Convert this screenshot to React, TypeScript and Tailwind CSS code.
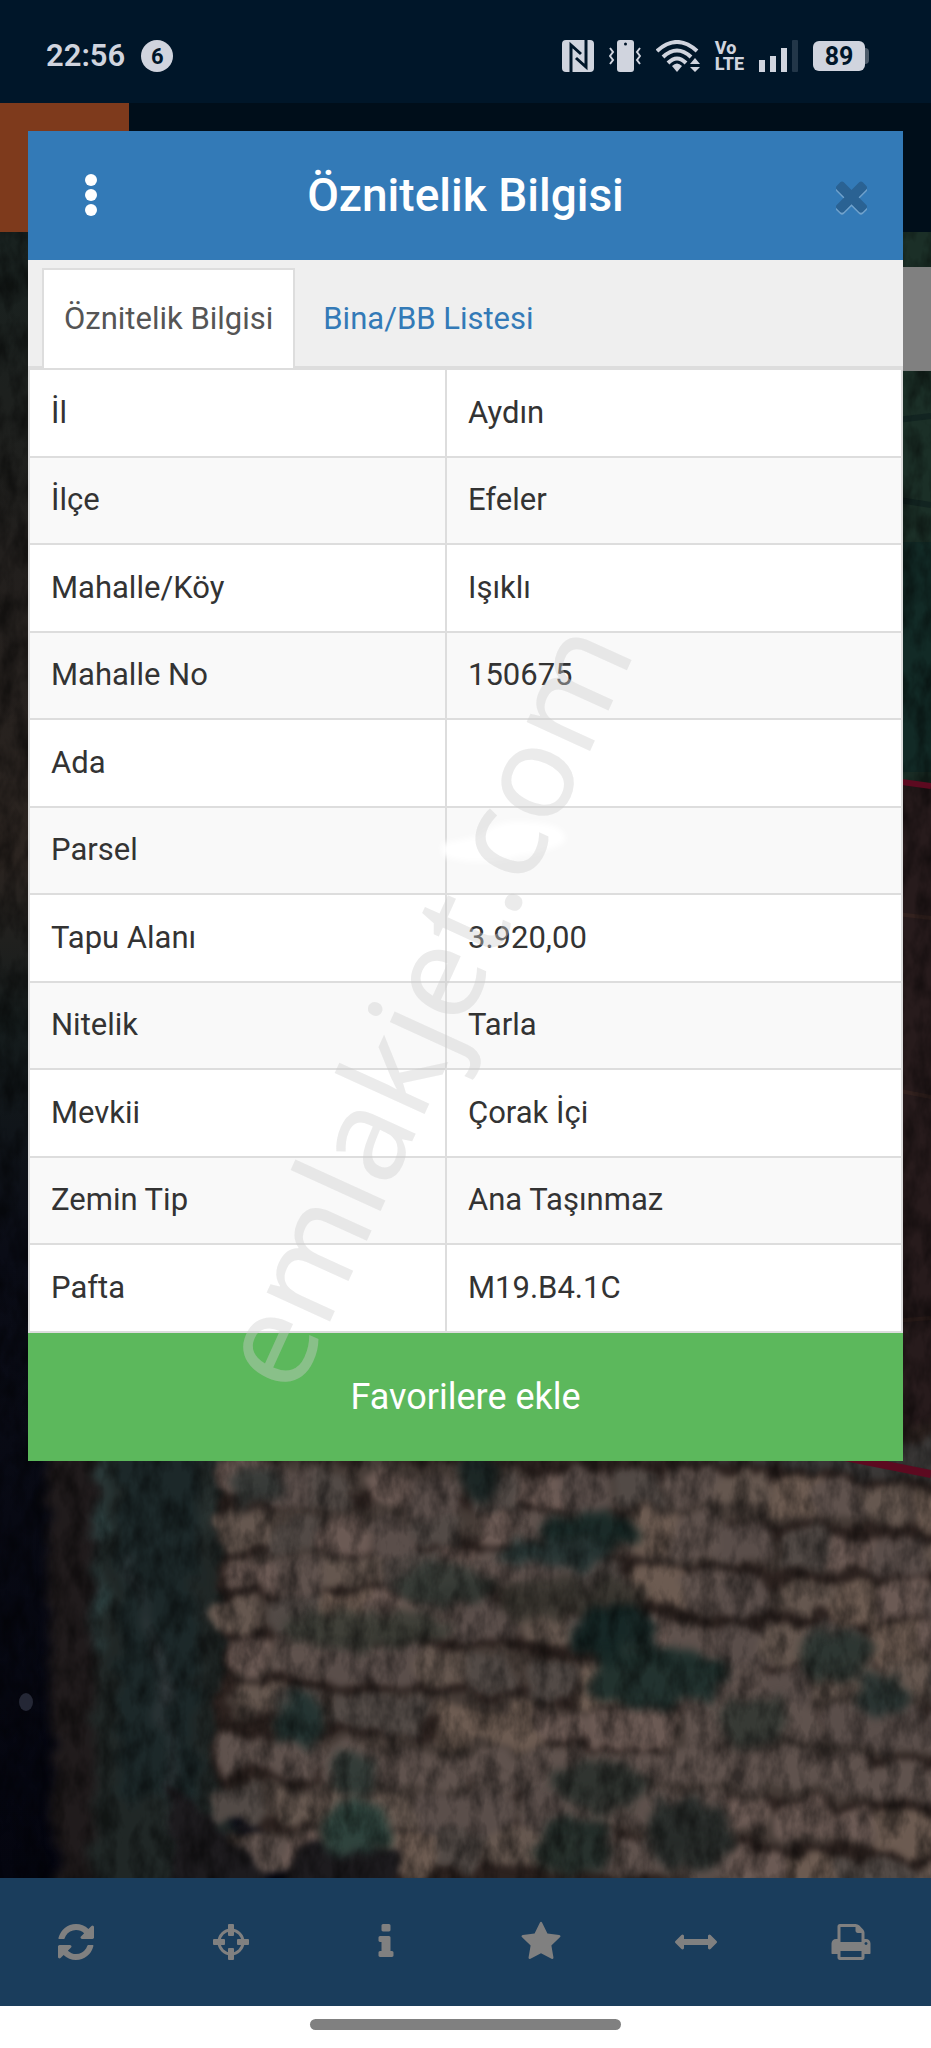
import { useState } from "react";

const parcelRows = [
  { label: "İl", value: "Aydın" },
  { label: "İlçe", value: "Efeler" },
  { label: "Mahalle/Köy", value: "Işıklı" },
  { label: "Mahalle No", value: "150675" },
  { label: "Ada", value: "" },
  { label: "Parsel", value: "", erased: true },
  { label: "Tapu Alanı", value: "3.920,00" },
  { label: "Nitelik", value: "Tarla" },
  { label: "Mevkii", value: "Çorak İçi" },
  { label: "Zemin Tip", value: "Ana Taşınmaz" },
  { label: "Pafta", value: "M19.B4.1C" },
];

const tools = [
  {
    label: "Yenile",
    path: "M1639 1056q0 5-1 7-64 268-268 434.5t-478 166.5q-146 0-282.5-55t-243.5-157l-129 129q-19 19-45 19t-45-19-19-45v-448q0-26 19-45t45-19h448q26 0 45 19t19 45-19 45l-137 137q71 66 161 102t187 36q134 0 250-65t186-179q11-17 53-117 8-23 30-23h192q13 0 22.5 9.5t9.5 22.5zm25-800v448q0 26-19 45t-45 19h-448q-26 0-45-19t-19-45 19-45l138-138q-148-137-349-137-134 0-250 65t-186 179q-11 17-53 117-8 23-30 23h-199q-13 0-22.5-9.5t-9.5-22.5v-7q65-268 270-434.5t480-166.5q146 0 284 55.5t245 156.5l130-129q19-19 45-19t45 19 19 45z",
  },
  { label: "Konum", path: "" },
  {
    label: "Bilgi",
    path: "M1216 1344v128q0 26-19 45t-45 19h-512q-26 0-45-19t-19-45v-128q0-26 19-45t45-19h64v-384h-64q-26 0-45-19t-19-45v-128q0-26 19-45t45-19h384q26 0 45 19t19 45v576h64q26 0 45 19t19 45zm-128-1152v192q0 26-19 45t-45 19h-256q-26 0-45-19t-19-45v-192q0-26 19-45t45-19h256q26 0 45 19t19 45z",
  },
  {
    label: "Favoriler",
    path: "M1728 647q0 22-26 48l-363 354 86 500q1 7 1 20 0 21-10.5 35.5t-30.5 14.5q-19 0-40-12l-449-236-449 236q-22 12-40 12-21 0-31.5-14.5t-10.5-35.5q0-6 2-20l86-500-364-354q-25-27-25-48 0-37 56-46l502-73 225-455q19-41 49-41t49 41l225 455 502 73q56 9 56 46z",
  },
  {
    label: "Ölçüm",
    path: "M1792 896q0 26-19 45l-256 256q-19 19-45 19t-45-19-19-45v-128h-1024v128q0 26-19 45t-45 19-45-19l-256-256q-19-19-19-45t19-45l256-256q19-19 45-19t45 19 19 45v128h1024v-128q0-26 19-45t45-19 45 19l256 256q19 19 19 45z",
  },
  {
    label: "Yazdır",
    path: "M448 1536h896v-256h-896v256zm0-640h896v-384h-160q-40 0-68-28t-28-68v-160h-640v640zm1152 64q0-26-19-45t-45-19-45 19-19 45 19 45 45 19 45-19 19-45zm128 0v416q0 13-9.5 22.5t-22.5 9.5h-224v160q0 40-28 68t-68 28h-960q-40 0-68-28t-28-68v-160h-224q-13 0-22.5-9.5t-9.5-22.5v-416q0-79 56.5-135.5t135.5-56.5h64v-544q0-40 28-68t68-28h672q40 0 88 20t76 48l152 152q28 28 48 76t20 88v256h64q79 0 135.5 56.5t56.5 135.5z",
  },
];

const closePath =
  "M1490 1322q0 40-28 68l-136 136q-28 28-68 28t-68-28l-294-294-294 294q-28 28-68 28t-68-28l-136-136q-28-28-28-68t28-68l294-294-294-294q-28-28-28-68t28-68l136-136q28-28 68-28t68 28l294 294 294-294q28-28 68-28t68 28l136 136q28 28 28 68t-28 68l-294 294 294 294q28 28 28 68z";

// field terraces: a row of tree crowns per line, drifting down to the right
const crownColors = ["#6b5a54", "#5f524d", "#5a4e4a", "#65574f", "#524a46", "#6c5b51"];

const crowns = Array.from({ length: 9 }, (_, row) =>
  Array.from({ length: 16 }, (_, col) => {
    const seed = (row * 37 + col * 53 + row * col * 11) % 17;
    return {
      x: 222 + col * 50 - (seed % 5) * 3 + (row % 3) * 6,
      y: 1228 + row * 46 + col * 2 + Math.round(Math.sin(col / 2 + row) * 9),
      width: 46 + (seed % 4) * 4,
      height: 33 + (seed % 3) * 4,
      color: crownColors[seed % crownColors.length],
    };
  })
).flat();

const bushes = [
  { x: 475, y: 1246, rx: 22, ry: 26, color: "#182524" },
  { x: 255, y: 1254, rx: 30, ry: 18, color: "#343937" },
  { x: 590, y: 1300, rx: 52, ry: 18, color: "#132624" },
  { x: 555, y: 1322, rx: 58, ry: 14, color: "#253534" },
  { x: 445, y: 1352, rx: 48, ry: 22, color: "#343a35" },
  { x: 570, y: 1366, rx: 76, ry: 20, color: "#38352f" },
  { x: 370, y: 1398, rx: 86, ry: 20, color: "#3b3d36" },
  { x: 615, y: 1402, rx: 42, ry: 30, color: "#102423" },
  { x: 655, y: 1445, rx: 70, ry: 32, color: "#1b2e2b" },
  { x: 835, y: 1423, rx: 34, ry: 28, color: "#2a3430" },
  { x: 880, y: 1465, rx: 24, ry: 24, color: "#263230" },
  { x: 300, y: 1490, rx: 26, ry: 24, color: "#203230" },
  { x: 755, y: 1488, rx: 38, ry: 24, color: "#333833" },
  { x: 355, y: 1540, rx: 24, ry: 22, color: "#2f3a36" },
  { x: 600, y: 1552, rx: 50, ry: 24, color: "#2b312d" },
  { x: 355, y: 1594, rx: 34, ry: 26, color: "#29413b" },
  { x: 575, y: 1612, rx: 40, ry: 30, color: "#222e2a" },
  { x: 690, y: 1600, rx: 44, ry: 34, color: "#252b29" },
];

export default function App() {
  const [tab, setTab] = useState("info");

  return (
    <div className="relative flex min-h-screen flex-col overflow-hidden bg-[#00111d] font-[Roboto,sans-serif]">
      <StatusBar />
      <div className="h-[129px] bg-[#000e1a]">
        <div className="h-full w-[129px] bg-[#7e3a1c]" />
      </div>
      <main className="relative flex-1">
        <SatelliteMap />
        <div className="absolute top-[35px] right-0 h-[104px] w-14 bg-[#808080]" />
      </main>
      <Toolbar />

      <section
        role="dialog"
        aria-labelledby="dialog-title"
        className="absolute inset-x-7 top-[131px] flex flex-col bg-white"
      >
        <header className="flex h-[129px] items-center justify-between bg-[#337ab7] px-7">
          <button aria-label="Menü" className="flex size-[70px] items-center justify-center">
            <svg viewBox="0 0 12 44" className="h-[44px] w-3 fill-white">
              <circle cx="6" cy="6" r="6" />
              <circle cx="6" cy="21" r="6" />
              <circle cx="6" cy="36" r="6" />
            </svg>
          </button>
          <h1 id="dialog-title" className="text-[46px] font-medium text-white">
            Öznitelik Bilgisi
          </h1>
          <button aria-label="Kapat" className="flex size-[70px] items-center justify-end">
            <svg
              viewBox="0 0 1792 1792"
              className="size-[47px] fill-[#2a6293] drop-shadow-[0_2px_0_rgba(255,255,255,0.3)]"
            >
              <path d={closePath} />
            </svg>
          </button>
        </header>

        <nav className="flex items-end border-b-2 border-[#ddd] bg-[#efefef] px-[14px] pt-2">
          <TabButton active={tab === "info"} onClick={() => setTab("info")}>
            Öznitelik Bilgisi
          </TabButton>
          <TabButton active={tab === "list"} onClick={() => setTab("list")}>
            Bina/BB Listesi
          </TabButton>
        </nav>

        <table className="w-full table-fixed border-collapse text-[31px] text-[#333]">
          <tbody>
            {parcelRows.map((row) => (
              <tr key={row.label} className="h-[88px] even:h-[87px] even:bg-[#f9f9f9]">
                <th
                  scope="row"
                  className="w-[417px] border-2 border-[#ddd] px-[21px] text-left font-normal"
                >
                  {row.label}
                </th>
                <td className="relative border-2 border-[#ddd] px-[21px]">
                  {row.value}
                  {row.erased && (
                    <svg
                      viewBox="0 0 140 70"
                      className="absolute top-2 -left-2 w-[140px] fill-white blur-[3px]"
                    >
                      <path d="M2 28L40 20Q60 2 90 6Q130 8 126 26Q110 36 80 40Q40 52 4 40z" />
                    </svg>
                  )}
                </td>
              </tr>
            ))}
          </tbody>
        </table>

        <button className="h-[128px] bg-[#5cb85c] text-[36px] text-white">Favorilere ekle</button>
      </section>

      <div className="pointer-events-none absolute inset-0 flex items-center justify-center">
        <span className="-rotate-[65.5deg] pb-[102px] font-['Noto_Sans',sans-serif] text-[130px] leading-[131px] text-[#cdcdcd]/40">
          emlakjet.com
        </span>
      </div>
    </div>
  );
}

function TabButton({
  active,
  onClick,
  children,
}: {
  active: boolean;
  onClick: () => void;
  children: React.ReactNode;
}) {
  return (
    <button
      onClick={onClick}
      className={
        active
          ? "-mb-[2px] mr-[6px] h-[100px] border-2 border-b-0 border-[#ddd] bg-white px-5 text-[31px] text-[#555]"
          : "-mb-[2px] mr-[6px] h-[100px] border-2 border-b-0 border-transparent px-5 text-[31px] text-[#337ab7]"
      }
    >
      {children}
    </button>
  );
}

function StatusBar() {
  return (
    <div className="flex h-[103px] items-center justify-between bg-[#001629] pt-[9px] pr-[62px] pl-[46px] text-[#d0d4de]">
      <div className="flex items-center gap-4">
        <span className="text-[31px] font-semibold">22:56</span>
        <span className="flex size-8 items-center justify-center rounded-full bg-[#d0d4de] text-[22px] font-bold text-[#001629]">
          6
        </span>
      </div>
      <div className="flex items-center gap-[15px]">
        {/* nfc */}
        <svg viewBox="0 0 32 32" className="size-8">
          <rect width="32" height="32" rx="4" fill="currentColor" />
          <path
            d="M9 32V5l10 9M24 0v27l-10-9"
            fill="none"
            stroke="#001629"
            strokeWidth="3"
          />
        </svg>
        {/* vibrate */}
        <svg viewBox="0 0 32 32" className="size-8 fill-current">
          <rect x="8" width="17" height="32" rx="3" />
          <circle cx="16.5" cy="4" r="1.5" fill="#001629" />
          <path
            d="M1 8l3 4-3 4 3 4-3 4M31 8l-3 4 3 4-3 4 3 4"
            fill="none"
            stroke="currentColor"
            strokeWidth="2"
          />
        </svg>
        {/* wifi */}
        <svg viewBox="0 0 44 32" className="h-8 w-11 fill-current">
          <path
            d="M1 11Q21-7 41 11M7 17Q21 4 35 17M12 23Q21 14 30 23"
            fill="none"
            stroke="currentColor"
            strokeWidth="4"
          />
          <path d="M16 26Q21 21 26 26L21 32z" />
          <path d="M39 18l5 6H34zM39 32l5-5H34z" />
        </svg>
        <span className="flex flex-col text-[18px] leading-4 font-extrabold">
          <span>Vo</span>
          <span>LTE</span>
        </span>
        {/* signal */}
        <svg viewBox="0 0 39 32" className="h-8 w-[39px] fill-current">
          <rect y="20" width="6" height="12" />
          <rect x="11" y="16" width="6" height="16" />
          <rect x="22" y="8" width="6" height="24" />
          <rect x="33" width="6" height="32" rx="1" fill="#223648" />
        </svg>
        <div className="flex items-center">
          <span className="flex h-[30px] w-[52px] items-center justify-center rounded-md bg-current">
            <span className="text-[25px] leading-none font-bold text-[#001629]">89</span>
          </span>
          <span className="h-4 w-1 rounded-r-sm bg-[#4d5c6b]" />
        </div>
      </div>
    </div>
  );
}

function Toolbar() {
  return (
    <footer className="bg-white">
      <nav className="-ml-[2px] grid h-[128px] grid-cols-6 bg-[#1a3d5c] pr-[2px]">
        {tools.map((tool) => (
          <button
            key={tool.label}
            aria-label={tool.label}
            className="flex items-center justify-center"
          >
            {tool.path ? (
              <svg viewBox="0 0 1792 1792" className="size-[42px] fill-[#808080]">
                <path d={tool.path} />
              </svg>
            ) : (
              <svg viewBox="0 0 36 36" className="size-9 fill-[#808080]">
                <circle cx="18" cy="18" r="12" fill="none" stroke="#808080" strokeWidth="3" />
                <rect x="15" width="6" height="12" rx="1" />
                <rect x="15" y="24" width="6" height="12" rx="1" />
                <rect y="15" width="12" height="6" rx="1" />
                <rect x="24" y="15" width="12" height="6" rx="1" />
              </svg>
            )}
          </button>
        ))}
      </nav>
      <div className="flex h-[42px] justify-center pt-[13px]">
        <div className="h-[11px] w-1/3 rounded-full bg-[#808080]" />
      </div>
    </footer>
  );
}

function SatelliteMap() {
  return (
    <svg
      viewBox="0 0 931 1646"
      preserveAspectRatio="xMidYMid slice"
      className="absolute inset-0 size-full"
      aria-hidden="true"
    >
      <defs>
        <linearGradient id="left-edge" x1="0" y1="0" x2="0" y2="1">
          <stop offset="0" stopColor="#18211f" />
          <stop offset="0.2" stopColor="#221f1d" />
          <stop offset="0.38" stopColor="#2b2420" />
          <stop offset="0.48" stopColor="#151c1c" />
          <stop offset="0.62" stopColor="#0a0c16" />
          <stop offset="1" stopColor="#04050f" />
        </linearGradient>
        <filter
          id="rough"
          x="-5%"
          y="-5%"
          width="110%"
          height="110%"
          colorInterpolationFilters="sRGB"
        >
          <feTurbulence type="fractalNoise" baseFrequency="0.03" numOctaves="3" seed="4" />
          <feDisplacementMap
            in="SourceGraphic"
            scale="28"
            xChannelSelector="R"
            yChannelSelector="G"
          />
          <feGaussianBlur stdDeviation="3" />
        </filter>
        <filter
          id="soft"
          x="-30%"
          y="-30%"
          width="160%"
          height="160%"
          colorInterpolationFilters="sRGB"
        >
          <feTurbulence type="fractalNoise" baseFrequency="0.04" numOctaves="3" seed="9" />
          <feDisplacementMap
            in="SourceGraphic"
            scale="34"
            xChannelSelector="R"
            yChannelSelector="G"
          />
          <feGaussianBlur stdDeviation="5" />
        </filter>
        <filter id="grain" x="0" y="0" width="100%" height="100%" colorInterpolationFilters="sRGB">
          <feTurbulence type="fractalNoise" baseFrequency="0.06 0.03" numOctaves="4" seed="2" />
          <feColorMatrix values="0 0 0 0 0  0 0 0 0 0  0 0 0 0 0  2.2 0 0 0 -0.8" />
        </filter>
      </defs>

      <rect width="931" height="1646" fill="url(#left-edge)" />
      <path d="M880 0h51v552l-51-5z" fill="#1b2f27" />
      <path d="M880 310h51v230h-51z" fill="#122a26" />
      <path d="M880 100l51 4M880 190l51-6M880 265l51 8" stroke="#122421" strokeWidth="6" />
      <path d="M880 547l51 6v680H880z" fill="#271b1c" />
      <path d="M880 680l51 6M880 855l51 10M880 1090l51-4" stroke="#33221f" strokeWidth="4" />

      <g filter="url(#soft)">
        <path d="M44 1180h70v500H56z" fill="#201b1c" />
        <path d="M98 1180h140v500H94z" fill="#202726" />
        <path d="M118 1190h80v380h-80z" fill="#1c2829" />
        <path d="M104 1215l-9 210" stroke="#2f4444" strokeWidth="6" />
        <path d="M126 1330l36 100 14 190" fill="none" stroke="#3d4346" strokeWidth="5" />
        <path d="M212 1240l-8 60" stroke="#3d4a48" strokeWidth="5" />
      </g>
      <path
        d="M228 1190h750v500H420L290 1634 215 1540z"
        fill="#2c221f"
        filter="url(#rough)"
      />

      <g filter="url(#rough)">
        {/* soil joining the crowns of one terrace */}
        {Array.from({ length: 9 }, (_, row) => (
          <path
            key={row}
            d={`M232 ${1246 + row * 46}q180 -10 360 14t380 18`}
            fill="none"
            stroke="#463c37"
            strokeWidth="28"
          />
        ))}
        {crowns.map((crown, i) => (
          <rect
            key={i}
            x={crown.x}
            y={crown.y}
            width={crown.width}
            height={crown.height}
            rx="8"
            fill={crown.color}
          />
        ))}
        <path d="M620 1220q200 16 340 34v-50H620z" fill="#3a3837" />
        <path d="M170 1550l70 60 50 66H170z" fill="#1d1b1e" />
        <path d="M290 1618h110v48H280z" fill="#1d1b1e" />
      </g>
      <g filter="url(#soft)" opacity="0.9">
        {bushes.map((bush, i) => (
          <ellipse key={i} cx={bush.x} cy={bush.y} rx={bush.rx} ry={bush.ry} fill={bush.color} />
        ))}
      </g>
      <rect width="931" height="1646" filter="url(#grain)" opacity="0.45" />
      <ellipse cx="26" cy="1470" rx="7" ry="9" fill="#242735" />

      {/* parcel outline */}
      <path d="M880 547l51 7" stroke="#5c0a20" strokeWidth="6" />
      <path d="M840 1224l91 18" stroke="#5c0a20" strokeWidth="8" />
    </svg>
  );
}
